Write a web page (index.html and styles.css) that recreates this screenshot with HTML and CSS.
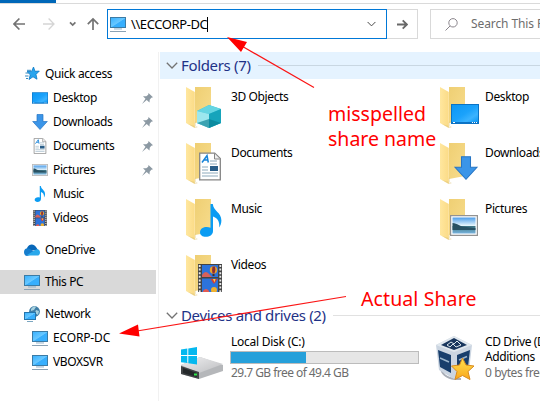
FILE: index.html
```html
<!DOCTYPE html>
<html lang="en">
<head>
<meta charset="utf-8">
<title>This PC</title>
<link rel="stylesheet" href="styles.css">
</head>
<body>
<svg class="defs" width="0" height="0" aria-hidden="true">
<defs>
<linearGradient id="blue" x1="0" y1="0" x2="1" y2="1"><stop offset="0" stop-color="#3ab2ff"/><stop offset=".5" stop-color="#69c8ff"/><stop offset=".55" stop-color="#37aefc"/><stop offset="1" stop-color="#37b0ff"/></linearGradient>
<linearGradient id="desk" x1="0" y1="0" x2="1" y2="1"><stop offset="0" stop-color="#0c97f4"/><stop offset=".5" stop-color="#1ba2fb"/><stop offset=".75" stop-color="#3bb3ff"/><stop offset="1" stop-color="#0c97f4"/></linearGradient>
<linearGradient id="gold" x1="0" y1="0" x2="1" y2="1"><stop offset="0" stop-color="#efcf73"/><stop offset="1" stop-color="#f7dc8d"/></linearGradient>
<linearGradient id="flap" x1="0" y1="0" x2="1" y2="0"><stop offset="0" stop-color="#ffe79f"/><stop offset="1" stop-color="#fbdb86"/></linearGradient>
<linearGradient id="sky" x1="0" y1="0" x2="0" y2="1"><stop offset="0" stop-color="#4c9de9"/><stop offset=".5" stop-color="#e5f4fb"/><stop offset=".51" stop-color="#386b7b"/><stop offset=".65" stop-color="#4a8596"/><stop offset="1" stop-color="#79b3dd"/></linearGradient>
<linearGradient id="disk" x1="0" y1="0" x2="1" y2="1"><stop offset="0" stop-color="#f0f0f1"/><stop offset="1" stop-color="#bcbdc0"/></linearGradient>
<linearGradient id="star" x1="0" y1="0" x2="0" y2="1"><stop offset="0" stop-color="#ffe34f"/><stop offset="1" stop-color="#f9a51a"/></linearGradient>
<symbol id="pc" viewBox="0 0 16 16"><path d="M0 1h16v11H0z" fill="#3b7ba5"/><path d="M1 2h14v9H1z" fill="url(#blue)"/><path d="M4 12.5h8v.9H4z" fill="#86a9c2"/><path d="M0 15h16v1H0z" fill="#8ba2b4"/></symbol>
<symbol id="pin" viewBox="0 0 11 11"><path d="M6.5 0 11 4.3 9.3 4.7 7.7 6.7 7.5 9.5 4.7 7 0 11 3.5 5.8 1 3.3 4.3 3.2 6.2 1.7z" fill="#8c99a3"/></symbol>
<symbol id="dl" viewBox="0 0 16 16"><path d="M5 .5h6v7h4.3L8 15.5.7 7.500H5z" fill="#3b95e8" stroke="#2775c4" stroke-width=".7"/></symbol>
<symbol id="desktop" viewBox="0 0 28 20"><path d="M0 0h28v20H0z" fill="#0b73c5"/><path d="M1 1h26v17H1z" fill="url(#desk)"/><path d="M2 18.500h2M21 18.500h1M23 18.500h1M25 18.500h1" stroke="#fff"/></symbol>
<symbol id="doc" viewBox="0 0 22 28"><path d="M.7.7h15L21.300 6v21.300H.7z" fill="#fff" stroke="#858585" stroke-width="1.300"/><path d="M15.500 1v5.500h5.300" fill="#eee" stroke="#858585"/><path d="m3 10 5-7 1.300 7M5 7.500h3.500" fill="none" stroke="#1683d8" stroke-width="1.500"/><path d="M11 8.500h7M11 11.500h7M3 14.500h6M3 17.500h6M3 20.500h16M3 23.500h16" stroke="#8daabc"/><path d="M11 13.500h8v5h-8z" fill="#295d88"/></symbol>
<symbol id="picture" viewBox="0 0 28 21"><path d="M.6.600h26.800v19.800H.6z" fill="#fff" stroke="#929292" stroke-width="1.200"/><path d="M2.500 2.500h23v16h-23z" fill="url(#sky)"/><path d="M2.500 8c5 0 7 4 14 4l9 1v2H2.500z" fill="#285163"/></symbol>
<symbol id="music" viewBox="0 0 22 33"><path d="M10.500 0h2.300c.7 7 8.600 8.500 8.600 16.500 0 3-1 5-2.200 7 .7-6-1.800-9.500-6.200-11V27c0 4-3.500 5.800-7.200 5.800C2.500 32.800 0 31 0 28.200c0-4.500 6-6.400 10.500-4.500z" fill="#0b9cf3"/></symbol>
<symbol id="film" viewBox="0 0 24 28"><path d="M0 0h24v28H0z" fill="#444"/><path d="M1.700 1v27M22.300 1v27" stroke="#e8e8e8" stroke-width="1.800" stroke-dasharray="2 1.600"/><path d="M4 1h16v12H4zM4 14.500h16V28H4z" fill="#2c73db"/><path d="M4 11q3-5 6-2l4 4H4z" fill="#d8605a"/><circle cx="15.500" cy="6" r="3.700" fill="#eba32c"/><path d="M14.500 2.500q-1 4 0 7h2q1.500-4 .5-7z" fill="#8b2d37"/><path d="M14.500 10h2v2h-2z" fill="#422e26"/><path d="M12.500 15h7l-3 4.500h-1z" fill="#d03f38"/><path d="M15 15h2.500l-1 3.500z" fill="#ffd34a"/><circle cx="16" cy="26" r="3" fill="#f0b12e"/><path d="M5 27q3-4 6 0v1H5z" fill="#e45b51"/></symbol>
<symbol id="folder" viewBox="0 0 40 44"><path d="M9 1h16v33L9 37z" fill="url(#gold)"/><path d="M0 1 8.800 6v36L0 37z" fill="url(#flap)"/><path d="m8.800 36 .8-1v6l-.8 1zM2 38l7 4 3-1-3-1z" fill="#dfc67d" opacity=".6"/></symbol>
<symbol id="chev" viewBox="0 0 12 7"><path d="m.8.800 5.200 5.200L11.200.800" fill="none" stroke="currentColor" stroke-width="1.300"/></symbol>
</defs>
</svg>
<div class="window">
<header class="top">
  <div class="ribbon"><span class="file-tab"></span></div>
  <div class="toolbar">
    <svg class="nav" width="94" height="16" viewBox="0 0 94 16" fill="none" stroke="#737373" stroke-width="1.700"><path d="M12 8H.9M6.400 2.500 1 8l5.400 5.500"/><path d="M30 8h11.100M35.600 2.500 41 8l-5.400 5.500" stroke="#d5d5d5" stroke-width="1.300"/><path d="m57 6.300 2.700 2.700 2.700-2.700"/><path d="M80 14V3.300M74.800 8.200 80 3l5.200 5.200"/></svg>
    <div class="address"><svg width="16" height="16"><use href="#pc"/></svg><span class="path">\\ECCORP-DC</span><i class="caret"></i><svg class="drop" width="9" height="6"><use href="#chev"/></svg></div>
    <div class="go"><svg width="11" height="11" viewBox="0 0 11 11" fill="none" stroke="#686868" stroke-width="1.800"><path d="M0 5.500h9.500M5.700 1.300l4.200 4.200-4.200 4.200"/></svg></div>
    <div class="search"><svg width="13" height="13" viewBox="0 0 13 13" fill="none" stroke="#8a858c"><circle cx="8" cy="4.800" r="4.200"/><path d="m5 8-4.500 4.500"/></svg><span>Search This PC</span></div>
  </div>
</header>
<div class="content">
<nav class="sidebar">
  <div class="row root"><svg width="16" height="16" viewBox="0 0 16 16"><path d="m9.500 1 1.500 4.300 4.300-.2-3.300 3.300 1 4.800-4-2.400-4 2.700 1.300-4.700L3 5.600l4.600-.2z" fill="#28a4ed" stroke="#0879c6" stroke-width=".8"/><path d="M3 4.300h4M1.500 7h3M1 10h3.500M2 12.500h2" stroke="#3587bd"/></svg><span>Quick access</span></div>
  <div class="row"><svg width="16" height="12"><use href="#desktop"/></svg><span>Desktop</span><svg class="pin"><use href="#pin"/></svg></div>
  <div class="row"><svg width="16" height="16"><use href="#dl"/></svg><span>Downloads</span><svg class="pin"><use href="#pin"/></svg></div>
  <div class="row"><svg width="16" height="16"><use href="#doc"/></svg><span>Documents</span><svg class="pin"><use href="#pin"/></svg></div>
  <div class="row"><svg width="16" height="12"><use href="#picture"/></svg><span>Pictures</span><svg class="pin"><use href="#pin"/></svg></div>
  <div class="row"><svg width="16" height="16"><use href="#music"/></svg><span>Music</span></div>
  <div class="row"><svg width="16" height="16"><use href="#film"/></svg><span>Videos</span></div>
  <div class="row root spaced"><svg width="16" height="12" viewBox="0 0 16 12"><path d="M3 4C5-.5 10-.5 12 3l2 3-11 1z" fill="#0867b9"/><path d="M0 8c0-3 3-5 6-3l6 4-9 3C1 12 0 10 0 8z" fill="#157dcd"/><path d="m3 11 8-5c3-2 5 0 5 2.500 0 2-1 3-3 3H4z" fill="#29a8eb"/></svg><span>OneDrive</span></div>
  <div class="row root spaced selected"><svg width="16" height="16"><use href="#pc"/></svg><span>This PC</span></div>
  <div class="row root spaced"><svg width="16" height="16" viewBox="0 0 16 16"><circle cx="10.500" cy="5.500" r="5.400" fill="#3f7da6"/><path d="M7 3q3-4 5-2l-2 3-3 1zM12 4l3 1-1 4-3-2z" fill="#a9d2df"/><path d="M0 6h12v8H0z" fill="#2576ad"/><path d="M1 7h10v6H1z" fill="url(#blue)"/><path d="M3 15.500h6" stroke="#7ba6c0"/></svg><span>Network</span></div>
  <div class="row caps"><svg width="16" height="16"><use href="#pc"/></svg><span>ECORP-DC</span></div>
  <div class="row"><svg width="16" height="16"><use href="#pc"/></svg><span>VBOXSVR</span></div>
</nav>
<main>
  <h2 class="group active"><svg class="chev" width="12" height="7"><use href="#chev"/></svg><span>Folders (7)</span><i></i></h2>
  <div class="grid">
    <div class="item"><svg width="40" height="44"><use href="#folder"/><path d="m11 25 12-6 12 4v14l-12 5-12-5z" fill="#34bfd3"/><path d="m11 25 12-6 12 4-12 5z" fill="#65d5e2"/><path d="m11 25 12 3v14l-12-5z" fill="#9ce7ee"/><path d="m23 28 12-5v14l-12 5z" fill="#16a4bb"/><path d="m11 37 12-4 12 4-12 5z" fill="#077e92" opacity=".65"/></svg><span>3D Objects</span></div>
    <div class="item"><svg width="40" height="44"><use href="#folder"/><use href="#desktop" x="11" y="18" width="28" height="20"/></svg><span>Desktop</span></div>
    <div class="item"><svg width="40" height="44"><use href="#folder"/><use href="#doc" x="13" y="10" width="22" height="29"/></svg><span>Documents</span></div>
    <div class="item"><svg width="40" height="44"><use href="#folder"/><use href="#dl" x="13" y="14" width="26" height="24"/></svg><span>Downloads</span></div>
    <div class="item"><svg width="40" height="44"><use href="#folder"/><use href="#music" x="14" y="6" width="22" height="33"/></svg><span>Music</span></div>
    <div class="item"><svg width="40" height="44"><use href="#folder"/><use href="#picture" x="10" y="17" width="28" height="21"/></svg><span>Pictures</span></div>
    <div class="item"><svg width="40" height="44"><use href="#folder"/><use href="#film" x="12" y="10" width="24" height="28"/></svg><span>Videos</span></div>
  </div>
  <h2 class="group"><svg class="chev" width="12" height="7"><use href="#chev"/></svg><span>Devices and drives (2)</span><i></i></h2>
  <div class="drives">
    <div class="drive local">
      <svg width="44" height="34" viewBox="0 0 44 34"><path d="m1 18 19-8 23 8v6L19 32 1 27z" fill="#b5b7ba"/><path d="m1 18 19-8 23 7-24 9z" fill="url(#disk)"/><path d="m1 19 18 6v7L1 27z" fill="#414446"/><path d="m3 21 14 5v4L3 26z" fill="#24282a"/><path d="M14 26.500h3v2h-3z" fill="#31e84b"/><path d="M1 2.500 7.300 1.600V8H1zM8.300 1.400 17 0v8H8.300zM1 9h6.300v7L1 15.300zM8.300 9H17v8.400l-8.700-1.200z" fill="#04b8ef"/></svg>
      <div class="info"><span class="label">Local Disk (C:)</span><div class="meter"><div class="used"></div></div><span class="muted">29.7 GB free of 49.4 GB</span></div>
    </div>
    <div class="drive cd">
      <svg width="44" height="48" viewBox="0 0 44 48"><path d="M7 34q3 11 20 10" fill="none" stroke="#a9aeb7" stroke-width="2"/><path d="m2 10 18-9 18 9-3 26-15 8L5 35z" fill="#cbd5e1"/><path d="m2 10 18-9 18 9-18 7z" fill="#e1e8ee"/><path d="m7 10 13-7 13 7-13 5z" fill="#19365d"/><path d="m13 10 4-3 3 2 3-3 4 4-5 2-3-3-3 3z" fill="none" stroke="#d8e4eb"/><path d="m4 15 13 5v18L6 32zM23 20l13-5-2 17-11 6z" fill="#183e6c"/><path d="m6 23 9 4M25 25l8-3.500" stroke="#9bb5cc" stroke-width="1.500"/><path d="m28.500 23 3.500 7 8 1-6 5.500 2 8-7.500-4-7.500 4 2-8-5.500-5.500 8-1z" fill="url(#star)" stroke="#d98b20"/></svg>
      <div class="info"><span>CD Drive (D:)</span><span>Additions</span><span class="muted">0 bytes free</span></div>
    </div>
  </div>
</main>
</div>
<svg class="arrows" width="540" height="401"><g stroke="#fb1515" stroke-width="1.200"><path d="m240 45 74 42.500M137 331l209-34.500"/></g><path d="m227 37 20 5-6 10zM119 333.500l19-9 1.500 12z" fill="#f00"/></svg>
<p class="note typo">misspelled<br>share name</p>
<p class="note actual">Actual Share</p>
</div>
</body>
</html>
```
FILE: styles.css
```css
* { box-sizing: border-box; }
body { margin: 0; background: #fff; color: #000; font: 12px/16px "Noto Sans", "Open Sans", sans-serif; letter-spacing: -.38px; }
svg { display: block; flex: none; }
.defs { position: absolute; }
.window { position: relative; width: 540px; height: 401px; overflow: hidden; }
.top { height: 52px; }
.ribbon { height: 4px; background: linear-gradient(#fff 3px, #dadada 3px); }
.file-tab { display: block; width: 56px; height: 3px; background: #0067b8; }
.toolbar { display: flex; height: 30px; margin-top: 5px; padding-left: 13px; align-items: center; }
.address { display: flex; flex: none; align-items: center; width: 280px; height: 30px; border: 1px solid #0078d7; padding: 0 10px 0 2px; }
.path { margin-left: 5px; font-size: 13px; letter-spacing: -.4px; }
.caret { width: 1px; height: 15px; background: #000; }
.drop { margin-left: auto; color: #444; }
.go { display: flex; flex: none; align-items: center; justify-content: center; width: 31px; height: 30px; border: 1px solid #d9d9d9; border-left: 0; }
.search { display: flex; flex: none; align-items: center; gap: 13px; width: 150px; height: 30px; margin-left: 12px; padding-left: 14px; border: 1px solid #d9d9d9; color: #6d6d6d; letter-spacing: -.1px; white-space: nowrap; }
.content { display: flex; height: 349px; }
.sidebar { width: 159px; padding-top: 10px; border-right: 1px solid #f1f1f1; }
.row { display: flex; align-items: center; gap: 5px; width: 156px; height: 24px; padding-left: 32px; white-space: nowrap; }
.root { padding-left: 24px; }
.caps { letter-spacing: -.15px; }
.spaced { margin-top: 8px; }
.selected { background: #d9d9d9; }
.pin { width: 11px; height: 11px; margin-left: auto; margin-right: 3px; }
main { flex: 1; min-width: 0; padding-left: 1px; }
.group { display: flex; align-items: center; height: 27px; margin: 0; padding-left: 6px; color: #1e3287; font-size: 15px; font-weight: 400; line-height: 20px; letter-spacing: -.34px; white-space: nowrap; }
.group span { margin-top: -2px; }
.active { background: #e5f3ff; }
.chev { margin-right: 3px; color: #737373; }
.group i { flex: 1; height: 1px; margin-left: 7px; background: #e1e1e1; }
.active i { background: #c9d7e2; }
.grid { display: grid; grid-template-columns: 254px 254px; grid-auto-rows: 56px; padding: 7px 0 0 26px; }
.item { display: flex; gap: 5px; }
.item span { margin-top: 3px; }
.grid + .group { margin-top: -8px; }
.drives { display: flex; padding-top: 5px; }
.drive { display: flex; flex: none; }
.local { width: 254px; padding-left: 20px; }
.local > svg { margin: 13px 6px 0 0; }
.cd { padding-left: 20px; }
.cd > svg { margin: 1px 7px 0 0; }
.info { display: flex; flex-direction: column; white-space: nowrap; }
.label { padding-left: 1px; letter-spacing: -.25px; }
.cd .info { line-height: 15px; }
.meter { width: 189px; height: 13px; margin: 1px 0; border: 1px solid #bcbcbc; background: #e6e6e6; }
.used { width: 40%; height: 100%; background: #26a0da; }
.muted { color: #6d6d6d; letter-spacing: -.55px; }
.local .muted { padding-left: 1px; }
.cd .muted { margin-top: 1px; letter-spacing: -.4px; }
.arrows { position: absolute; inset: 0; }
.note { position: absolute; margin: 0; color: #f00; font-size: 19.500px; line-height: 25px; letter-spacing: .1px; white-space: nowrap; }
.typo { left: 328px; top: 101px; letter-spacing: 0; }
.actual { left: 361px; top: 286px; }
```
